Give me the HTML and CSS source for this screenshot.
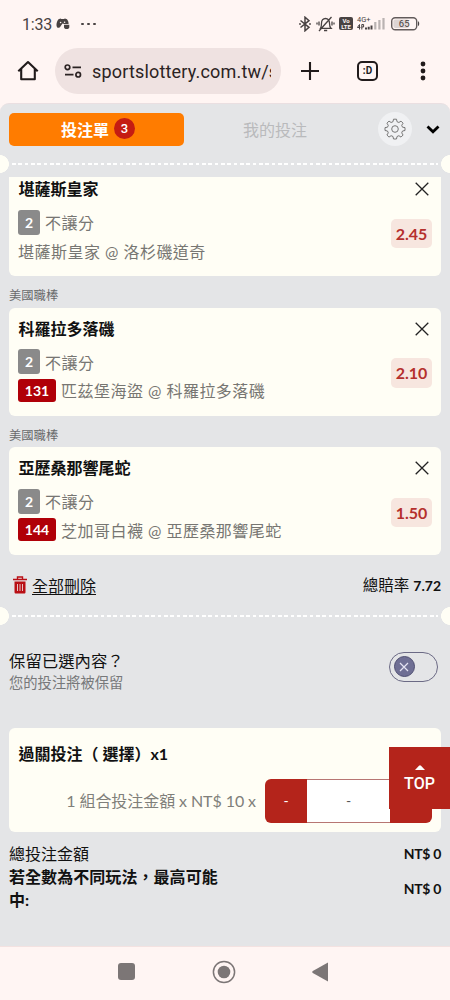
FILE: index.html
```html
<!DOCTYPE html>
<html lang="zh-Hant">
<head>
<meta charset="utf-8">
<title>投注單</title>
<link rel="stylesheet" href="styles.css">
</head>
<body>
<div class="phone">
  <header class="status">
    <div class="status-left">
      <span class="clock">1:33</span>
      <svg class="pad" width="14" height="12" viewBox="0 0 14 12"><path d="M2.500 1.200 4.500.4l.8.7h2.600L9 .4l2 .8c1.200 1.500 1.600 3 1.600 4.800H8.200L6.500 5.500 4.600 8.200C4 9.500 3 10 1.600 9.800-.2 8.600.2 3.800 2.500 1.200z" fill="#484242"/><circle cx="4.600" cy="4.500" r=".8" fill="#fff5f3"/><circle cx="8.600" cy="4.300" r=".8" fill="#fff5f3"/><path d="M8 6.700h5.300v2.200c0 1.400-1 2.200-2.600 2.200S8 10.300 8 8.900z" fill="#484242"/></svg>
      <span class="dots"><i></i><i></i><i></i></span>
    </div>
    <div class="status-right">
      <svg width="12" height="16" viewBox="0 0 12 16"><path d="M1.500 4.500 10 11.300 6 14.800V1.200l4 3.500L1.500 11.500" fill="none" stroke="#484242" stroke-width="1.500"/><circle cx="1" cy="8" r=".9" fill="#484242"/><circle cx="11" cy="8" r=".9" fill="#484242"/></svg>
      <svg class="mute" width="19" height="16" viewBox="0 0 19 16" fill="none" stroke="#484242" stroke-width="1.300"><path d="M4.500 12.300h10.500c-1.300-1.200-1.500-2-1.500-5 0-3-1.500-4.800-4-4.800s-4 1.800-4 4.800c0 3-.2 3.800-1 5zM8 14.500h3.200M3 5.500v4M1 6.500v2M16 5.500v4M18 6.500v2M3 15 15.500 1"/></svg>
      <span class="volte"><b>Vo</b><b>LTE</b></span>
      <div class="net"><span>4G+</span>
        <svg width="28" height="12" viewBox="0 0 28 12"><path d="M2.500 11.500V6.500L.4 9.500h3M4.800 11.500v-5h1.800v2.500H4.800" stroke="#484242" stroke-width="1" fill="none"/><path d="M8 9.500h2v2H8zM10.700 8.700h2v2.800h-2z" fill="#484242"/><path d="M13.500 7.500h2v4h-2z" fill="#484242"/><path d="M17.200 4h2.200v7.500h-2.200zM21.300 2h2.200v9.500h-2.200zM25.400 0h2.200v11.500h-2.200z" fill="#bab3b2"/></svg>
      </div>
      <svg class="battery" width="29" height="14" viewBox="0 0 29 14"><rect x=".7" y=".7" width="25" height="12" rx="3.500" fill="none" stroke="#625b5b" stroke-width="1.400"/><rect x="2.400" y="2.400" width="15.500" height="8.600" rx="2" fill="#ddd5d4"/><path d="M27 4.300c1.600.5 1.600 4.300 0 4.800z" fill="#484242"/><text x="13.200" y="10.400" text-anchor="middle" class="pct">65</text></svg>
    </div>
  </header>

  <nav class="toolbar">
    <svg class="home" width="22" height="22" viewBox="0 0 22 22"><path d="M1.300 11.200 11 2l9.700 9.200M4.200 9v10.300h13.600V9" fill="none" stroke="#211b1b" stroke-width="2.100" stroke-linejoin="round"/></svg>
    <div class="url">
      <svg width="18" height="14" viewBox="0 0 18 14" fill="none" stroke="#2b2323" stroke-width="1.700"><circle cx="3.500" cy="3.300" r="2.300"/><path d="M8.500 3.300H17M1 10.700h8.500"/><circle cx="14.200" cy="10.700" r="2.300"/></svg>
      <span class="address">sportslottery.com.tw/s</span>
    </div>
    <svg class="plus" width="20" height="20" viewBox="0 0 20 20"><path d="M10 1v18M1 10h18" stroke="#211b1b" stroke-width="2.100"/></svg>
    <span class="tabs-count">:D</span>
    <svg class="kebab" width="6" height="20" viewBox="0 0 6 20" fill="#211b1b"><circle cx="3" cy="3" r="2.400"/><circle cx="3" cy="10" r="2.400"/><circle cx="3" cy="17" r="2.400"/></svg>
  </nav>

  <main class="slip">
    <div class="tabs">
      <div class="tab active">投注單<span class="count">3</span></div>
      <div class="tab">我的投注</div>
      <span class="gear"><svg width="22" height="22" viewBox="0 0 22 22" fill="none" stroke="#777" stroke-width="1"><circle cx="11" cy="11" r="3.300"/><path d="M9.500 1.200h3l.5 2.500 1.900.8 2.100-1.400 2.100 2.100-1.400 2.100.8 1.900 2.500.4v2.900l-2.500.5-.8 1.900 1.400 2.100-2.100 2.100-2.100-1.400-1.900.8-.5 2.500h-3L9 18.500l-1.900-.8L5 19.100 2.900 17l1.400-2.100-.8-1.900-2.500-.5V9.600l2.500-.4.8-1.900L2.900 5.200 5 3.100l2.100 1.400L9 3.700z" stroke-linejoin="round"/></svg></span>
      <svg class="chev" width="14" height="9" viewBox="0 0 14 9"><path d="M1.500 1.500 7 6.800l5.500-5.300" fill="none" stroke="#000" stroke-width="2.800"/></svg>
    </div>
    <div class="tear"></div>

    <section class="list">
      <article class="card">
        <div class="info">
          <h3>堪薩斯皇家</h3>
          <p class="pick"><b class="tag">2</b>不讓分</p>
          <p class="match">堪薩斯皇家 @ 洛杉磯道奇</p>
        </div>
        <div class="side"><svg width="14" height="14" viewBox="0 0 14 14"><path d="m.7.7 12.600 12.600M13.300.7.7 13.300" stroke="#222" stroke-width="1.300"/></svg><b class="odds">2.45</b></div>
      </article>
      <h4>美國職棒</h4>
      <article class="card">
        <div class="info">
          <h3>科羅拉多落磯</h3>
          <p class="pick"><b class="tag">2</b>不讓分</p>
          <p class="match"><b class="no">131</b>匹茲堡海盜 @ 科羅拉多落磯</p>
        </div>
        <div class="side"><svg width="14" height="14" viewBox="0 0 14 14"><path d="m.7.7 12.600 12.600M13.300.7.7 13.300" stroke="#222" stroke-width="1.300"/></svg><b class="odds">2.10</b></div>
      </article>
      <h4>美國職棒</h4>
      <article class="card">
        <div class="info">
          <h3>亞歷桑那響尾蛇</h3>
          <p class="pick"><b class="tag">2</b>不讓分</p>
          <p class="match"><b class="no">144</b>芝加哥白襪 @ 亞歷桑那響尾蛇</p>
        </div>
        <div class="side"><svg width="14" height="14" viewBox="0 0 14 14"><path d="m.7.7 12.600 12.600M13.300.7.7 13.300" stroke="#222" stroke-width="1.300"/></svg><b class="odds">1.50</b></div>
      </article>
    </section>

    <div class="summary">
      <svg width="14" height="18" viewBox="0 0 14 18"><path d="M1.500 5.500h11V16c0 1-.5 1.500-1.500 1.500H3c-1 0-1.500-.5-1.500-1.500z" fill="#b90f15"/><path d="M0 3.500h14M4.500 3V1h5v2" fill="none" stroke="#b90f15" stroke-width="1.400"/><path d="M4.500 8v7M7 8v7M9.500 8v7" stroke="#e4c4c6" stroke-width="1"/></svg>
      <a class="clear">全部刪除</a>
      <span class="total">總賠率 <b>7.72</b></span>
    </div>
    <div class="tear"></div>

    <div class="keep">
      <div>
        <p class="keep-title">保留已選內容？</p>
        <p class="keep-sub">您的投注將被保留</p>
      </div>
      <span class="toggle"><i><svg width="10" height="10" viewBox="0 0 10 10"><path d="m1 1 8 8M9 1 1 9" stroke="#e4e3f2" stroke-width="1.200"/></svg></i></span>
    </div>

    <section class="bet">
      <h3>過關投注（ 選擇）x1</h3>
      <div class="stake">
        <span class="label">1 組合投注金額 x NT$ 10 x</span>
        <div class="stepper"><span class="btn">-</span><span class="val">-</span><span class="btn"></span></div>
      </div>
      <div class="top"><svg width="10" height="5" viewBox="0 0 10 5"><path d="M0 5 4 .7q1-1 2 0L10 5z" fill="#fff"/></svg>TOP</div>
    </section>

    <dl class="sums">
      <dt>總投注金額</dt><dd>NT$ 0</dd>
      <dt class="strong">若全數為不同玩法，最高可能中:</dt><dd>NT$ 0</dd>
    </dl>
  </main>

  <footer class="sysnav">
    <svg width="17" height="17" viewBox="0 0 17 17"><rect width="17" height="17" rx="3" fill="#7c7676"/></svg>
    <svg width="24" height="24" viewBox="0 0 24 24"><circle cx="12" cy="12" r="10.600" fill="none" stroke="#7c7676" stroke-width="1.500"/><circle cx="12" cy="12" r="6.300" fill="#7c7676"/></svg>
    <svg width="16" height="20" viewBox="0 0 16 20"><path d="M16 .6v18.800L.8 11q-1.200-1 0-2z" fill="#7c7676"/></svg>
  </footer>
</div>
</body>
</html>
```
FILE: styles.css
```css
* { box-sizing: border-box; }
body, h3, h4, p, dl, dd { margin: 0; }
body { background: #fff5f3; font-family: Lato, "Noto Sans CJK TC", sans-serif; font-size: 16px; color: #111; }
svg { display: block; flex: none; }
.phone { width: 450px; height: 1000px; overflow: hidden; display: flex; flex-direction: column; }

.status { height: 48px; display: flex; justify-content: space-between; padding: 0 30px 0 22px; font-family: Roboto, sans-serif; color: #484242; }
.status-left, .status-right { display: flex; align-items: center; }
.clock { font-size: 16px; letter-spacing: -.2px; padding-top: 1px; }
.pad { margin-left: 4px; }
.dots { display: flex; gap: 3.500px; margin-left: 11px; }
.dots i { width: 2.500px; height: 2.500px; border-radius: 50%; background: #484242; }
.mute { margin-left: 5px; }
.volte { margin-left: 4px; width: 14px; height: 13px; border-radius: 2px; background: #484242; color: #fff5f3; display: flex; flex-direction: column; align-items: center; justify-content: center; }
.volte b { font-size: 6px; line-height: 5.500px; }
.net { margin-left: 4px; position: relative; padding-top: 1px; }
.net span { position: absolute; left: 0; top: -1.500px; font-size: 7.500px; line-height: 8px; }
.battery { margin-left: 6px; }
.pct { font: 9.500px Roboto, sans-serif; fill: #484242; }

.toolbar { height: 55px; display: flex; align-items: flex-start; padding-left: 17px; }
.home { margin-top: 12px; }
.url { margin-left: 16px; width: 226px; height: 46px; border-radius: 23px; background: #efe2e1; display: flex; align-items: center; padding: 0 9px 0 9px; }
.address { margin-left: 10px; padding-top: 3px; width: 179px; overflow: hidden; white-space: nowrap; font: 18px/24px Roboto, sans-serif; color: #2b2323; letter-spacing: .18px; }
.plus { margin: 13px 0 0 19px; }
.tabs-count { margin: 13px 0 0 37px; width: 21px; height: 20px; border: 2px solid #211b1b; border-radius: 5px; font: bold 10px/16px Roboto, sans-serif; text-align: center; color: #211b1b; }
.kebab { margin: 13px 0 0 42px; }

.slip { height: 844px; background: #e4e5e7; border-radius: 9px 9px 0 0; border-top: 1px solid #eadfe1; }
.tabs { height: 51px; display: flex; align-items: center; padding: 0 10px 0 9px; }
.tab { width: 175px; height: 33px; display: flex; align-items: center; justify-content: center; color: #b9babc; padding-bottom: 1px; }
.tab.active { background: #ff7c00; border-radius: 5px; color: #fff; font-weight: 700; padding-left: 3px; }
.count { width: 21px; height: 21px; margin-left: 5px; border-radius: 50%; background: #c51c12; font: 500 13px/21px Roboto, sans-serif; text-align: center; }
.tab + .tab { width: 182px; }
.gear { margin-left: 12px; width: 34px; height: 34px; border-radius: 50%; background: #f0f1f3; display: flex; align-items: center; justify-content: center; }
.chev { margin-left: 14px; }
.tear { height: 18px; background:
  radial-gradient(circle at 0 9px, #fffef5 8.600px, transparent 9.200px),
  radial-gradient(circle at 100% 9px, #fffef5 8.600px, transparent 9.200px),
  repeating-linear-gradient(90deg, #fff 0 3.800px, transparent 3.800px 6.330px) 12px 8.500px / 426px 2px no-repeat; }

.list { height: 383px; margin-top: 4px; padding: 0 9px; overflow: hidden; }
.list .card:first-child { margin-top: -8.500px; }
.card { height: 108px; display: flex; justify-content: space-between; background: #fffef5; border-radius: 6px; padding: 9px; }
.card h3 { font-size: 16px; line-height: 24px; padding-left: .5px; }
.list h4 { height: 31.500px; font-size: 12.300px; font-weight: 400; line-height: 39px; color: #68696b; }
.pick, .match { display: flex; align-items: center; color: #777672; letter-spacing: .48px; white-space: pre; }
.pick { height: 25px; margin-top: 8.500px; }
.match { height: 23px; margin-top: 4.500px; }
.tag, .no { margin-right: 5px; border-radius: 3px; color: #fff; font-size: 14px; letter-spacing: 0; text-align: center; }
.tag { width: 22px; height: 25px; background: #8a8a8a; line-height: 25px; }
.no { width: 38px; height: 23px; background: #b00008; line-height: 23px; }
.side { display: flex; flex-direction: column; align-items: flex-end; }
.side svg { margin: 5px 3px 0 0; }
.odds { margin-top: 22.500px; width: 41px; height: 29.500px; border-radius: 5px; background: #f7e6df; color: #b5302d; font-size: 16px; line-height: 29px; text-align: center; }

.summary { height: 47px; display: flex; align-items: center; padding: 5px 9px 0 13px; }
.summary svg { margin-top: -1px; }
.clear { margin-left: 5px; text-decoration: underline; text-underline-offset: 2px; line-height: 24px; }
.total { margin-left: auto; font-size: 15.500px; line-height: 24px; }
.total b { font-size: 14px; }

.keep { height: 103.500px; display: flex; justify-content: space-between; padding: 24px 12px 0 9px; }
.keep-title { font-size: 16.400px; line-height: 24px; }
.keep-sub { font-size: 14.300px; line-height: 20px; color: #77787a; }
.toggle { width: 49px; height: 30px; margin-top: 3px; padding: 3.500px; border: 1px solid #6b6a85; border-radius: 15px; }
.toggle i { width: 21px; height: 21px; border-radius: 50%; background: #6f6f94; border: 1px solid #4f4f72; display: flex; align-items: center; justify-content: center; }

.bet { position: relative; height: 103.500px; margin: 0 9px; padding: 12.500px 9px 0 9.500px; background: #fffef5; border-radius: 6px; }
.bet h3 { font-size: 16px; line-height: 25px; }
.stake { display: flex; align-items: center; justify-content: flex-end; margin-top: 13px; }
.label { color: #807f7a; white-space: pre; letter-spacing: -.08px; padding-bottom: 2px; }
.stepper { display: flex; width: 167px; height: 44px; margin-left: 9px; border-radius: 6px; overflow: hidden; background: #b4241b; color: #fff; font-size: 14px; line-height: 44px; text-align: center; }
.btn { width: 42px; }
.val { flex: 1; background: #fff; color: #555; line-height: 41px; border: solid #b77673; border-width: 1px 0; }
.top { position: absolute; right: -9px; top: 18.500px; width: 61px; height: 62px; background: #b4241b; color: #fff; font-size: 16px; line-height: 20px; font-weight: 500; font-family: Roboto, sans-serif; display: flex; flex-direction: column; align-items: center; padding-top: 18px; gap: 4px; }

.sums { display: grid; grid-template-columns: 224px auto; padding: 10px 9px 0; line-height: 23.300px; }
.sums .strong { font-weight: 700; width: 212px; letter-spacing: .06px; }
.sums dd { text-align: right; font-weight: 700; font-size: 14px; align-self: center; letter-spacing: -.3px; }

.sysnav { height: 54px; border-top: 1px solid #f3e2e1; display: flex; align-items: center; padding: 0 0 4px 118px; }
.sysnav svg:nth-child(2) { margin-left: 76.500px; }
.sysnav svg:nth-child(3) { margin-left: 76.500px; }
```
